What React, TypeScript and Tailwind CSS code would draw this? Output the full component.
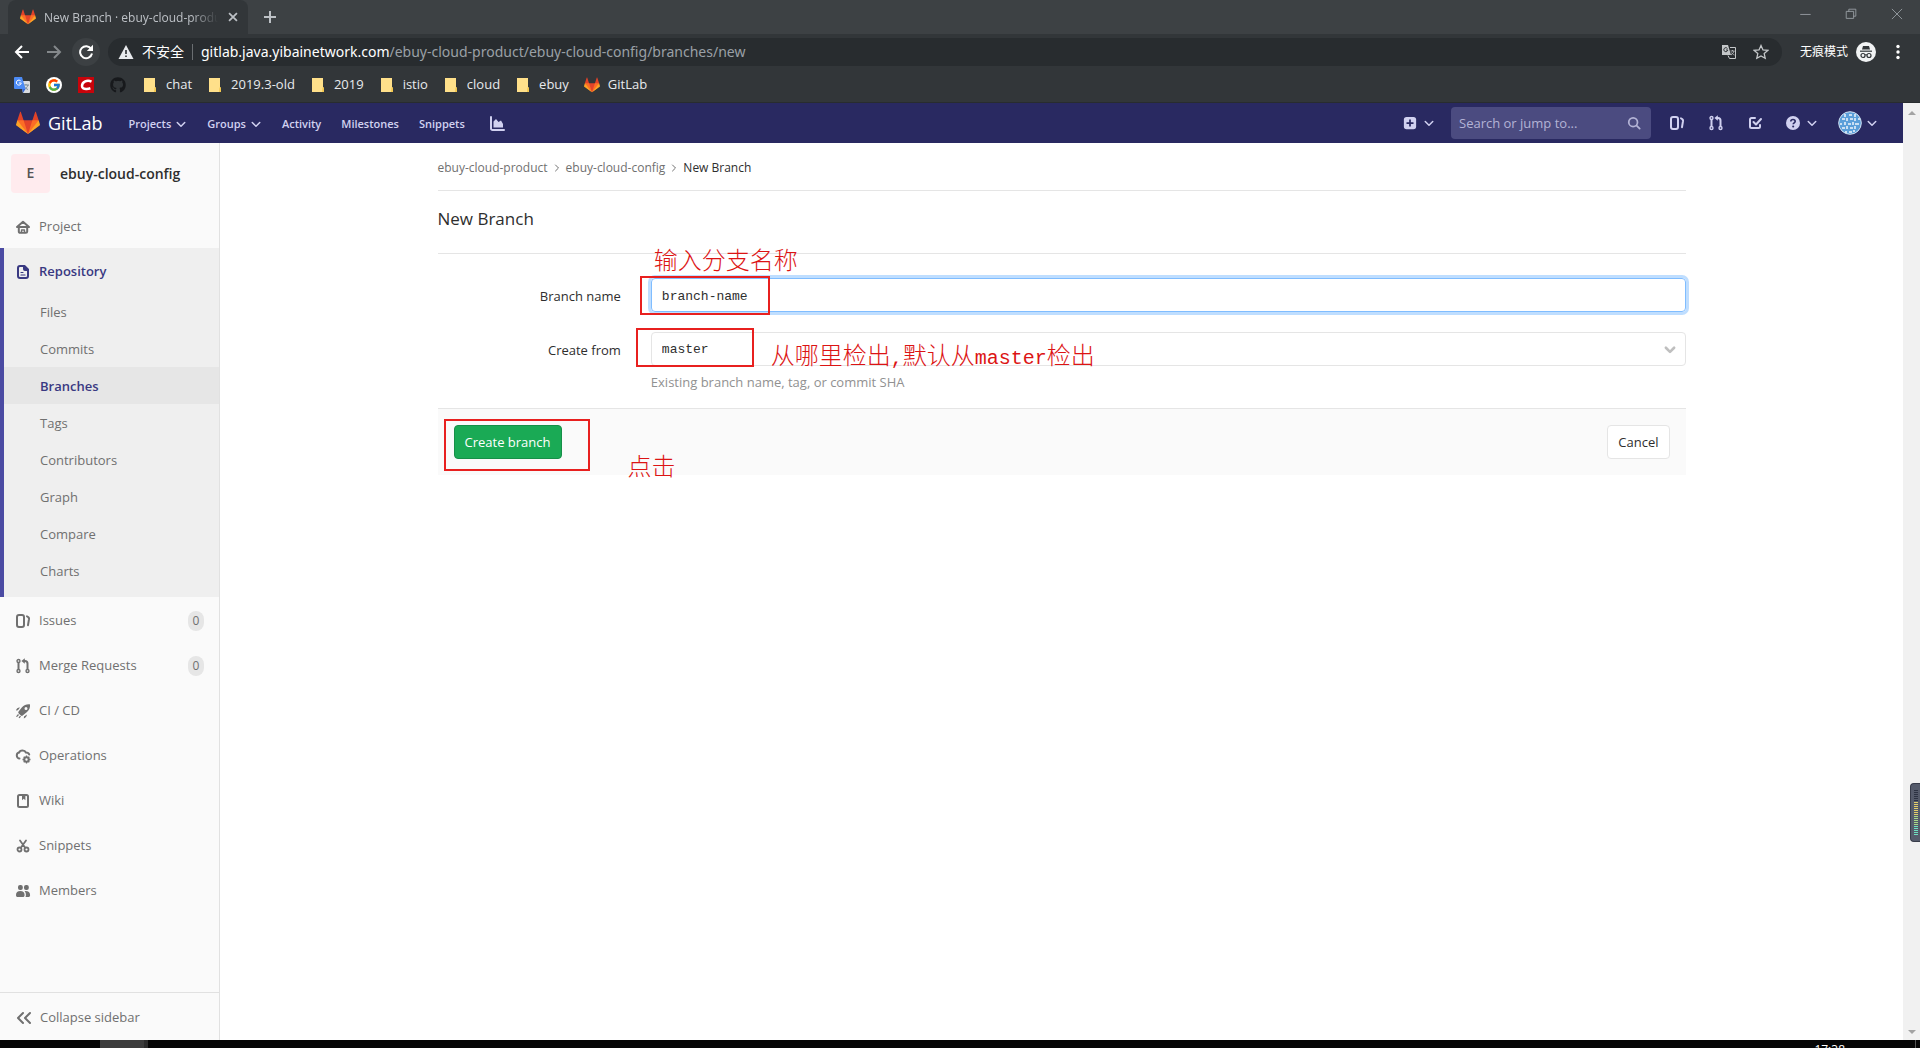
import React from "react";
import { FcGoogle } from "react-icons/fc";
import { FaGithub } from "react-icons/fa";

const UI = "font-['Open_Sans','Noto_Sans_CJK_SC',sans-serif]";

function Tanuki({ className }: { className: string }) {
  return (
    <svg className={className} viewBox="0 0 36 36" aria-hidden="true">
      <path fill="#e24329" d="M2 14l9.38 9v-9l-4-12.28c-.205-.632-1.176-.632-1.38 0z" />
      <path fill="#e24329" d="M34 14l-9.38 9v-9l4-12.28c.205-.632 1.176-.632 1.38 0z" />
      <path fill="#e24329" d="M18 34.38L3 14h30z" />
      <path fill="#fc6d26" d="M18 34.38L11.38 14H2l4 11z" />
      <path fill="#fc6d26" d="M18 34.38L24.62 14H34l-4 11z" />
      <path fill="#fca326" d="M2 14L.1 20.16c-.18.565 0 1.2.5 1.56l17.42 12.66z" />
      <path fill="#fca326" d="M34 14l1.9 6.16c.18.565 0 1.2-.5 1.56L18 34.38z" />
    </svg>
  );
}

type IconProps = { children: React.ReactNode; className?: string };

function Icon({ children, className = "size-4" }: IconProps) {
  return (
    <svg
      className={`shrink-0 ${className}`}
      viewBox="0 0 16 16"
      fill="none"
      stroke="currentColor"
      strokeWidth="2"
      strokeLinecap="round"
      strokeLinejoin="round"
      aria-hidden="true"
    >
      {children}
    </svg>
  );
}

const Chevron = ({ className = "size-3" }: { className?: string }) => (
  <Icon className={className}>
    <path d="M3 6l5 5 5-5" />
  </Icon>
);

const IssuesIcon = () => (
  <Icon>
    <rect x="2" y="2" width="7" height="12" rx="2" />
    <path d="M12 3.400c1.700.6 2.200 1.400 2 2.800l-1 6" />
  </Icon>
);

const MergeIcon = () => (
  <Icon>
    <circle cx="3.500" cy="3" r="1.500" strokeWidth="1.400" />
    <circle cx="3.500" cy="13" r="1.500" strokeWidth="1.400" />
    <circle cx="12.500" cy="13" r="1.500" strokeWidth="1.400" />
    <path d="M3.500 5v6M12.500 11V5.500c0-1.500-.8-2.500-2.500-2.500H9" strokeLinecap="butt" />
    <path d="M9.800 .3v5.400L6.400 3z" fill="currentColor" stroke="none" />
  </Icon>
);

const HomeIcon = () => (
  <Icon>
    <path d="M2 8L8 2.800 14 8z" />
    <path d="M3.800 8v4.500a1.300 1.300 0 0 0 1.300 1.300h5.800a1.300 1.300 0 0 0 1.300-1.300V8" />
    <path d="M6.500 13.500V11h3v2.500" strokeWidth="1.300" />
  </Icon>
);

const DocIcon = () => (
  <Icon>
    <path d="M9.500 2H5a2 2 0 0 0-2 2v8a2 2 0 0 0 2 2h6a2 2 0 0 0 2-2V5.500z" />
    <path d="M8.500 2v3.500a1 1 0 0 0 1 1H13L9.500 2z" fill="currentColor" strokeWidth="1" />
    <path d="M6 8.500h2M6 11h4" strokeWidth="1.200" />
  </Icon>
);

const RocketIcon = () => (
  <Icon>
    <g fill="currentColor" stroke="none">
      <path
        fillRule="evenodd"
        d="M15 1.400c-3.300-.3-6 .6-8 2.900L3.600 8.600c-.5.700-.4 1.300.1 1.800l2.200 2.100c.6.500 1.200.6 1.800.1l4.300-3.700C14.500 6.700 15.300 4.300 15 1.400zM11 7a1.500 1.500 0 1 1 0-3 1.500 1.500 0 0 1 0 3z"
      />
      <path d="M5 4.500C3 4.300 1.600 5.300.9 7.500l2-.3zM11.800 11.500c.1 1.800-.9 3.100-3 3.900l.2-2z" />
      <path d="M3 11l-2 2.500 1 .6 2-2.100zM5 12.700l-1.500 1.900 1.200.6L6 13.300z" />
    </g>
  </Icon>
);

const OpsIcon = () => (
  <Icon>
    <path d="M4.500 10.500C3 10.500 1.800 9.200 1.800 7.500s1-2.700 2.300-2.900C4.500 3.300 5.900 2.500 7.500 2.500c1.700 0 2.900.8 3.400 2 1.700 0 2.900.8 3.300 2" />
    <circle cx="11.500" cy="11.500" r="2.200" />
    <g strokeWidth="1.300" strokeLinecap="butt">
      <path d="M11.500 7.500v1.500M11.500 14v1.500M7.500 11.500h1.500M14 11.500h1.500M8.700 8.700l1 1M13.300 13.300l1 1M14.300 8.700l-1 1M9.700 13.300l-1 1" />
    </g>
  </Icon>
);

const WikiIcon = () => (
  <Icon>
    <rect x="3" y="2" width="10" height="12" rx="1.500" />
    <path d="M7 2v5.200l1.700-1.400 1.700 1.400V2z" fill="currentColor" stroke="none" />
  </Icon>
);

const ScissorsIcon = () => (
  <Icon>
    <circle cx="4.500" cy="11.500" r="2" strokeWidth="1.800" />
    <circle cx="11.500" cy="11.500" r="2" strokeWidth="1.800" />
    <path d="M6 9.500L11 2.500M10 9.500L5 2.500" strokeWidth="1.800" />
  </Icon>
);

const MembersIcon = () => (
  <Icon>
    <g fill="currentColor" stroke="none">
      <rect x="3" y="2" width="4.800" height="5" rx="2" />
      <rect x="9" y="2" width="4.800" height="5" rx="2" />
      <path d="M1 12c0-2.700 1.500-4 4.300-4s4.300 1.300 4.300 4c0 1.400-.6 2-1.800 2h-5c-1.200 0-1.800-.6-1.800-2z" />
      <path d="M9.500 8.100c3.500-.4 5.600 1.100 5.600 3.900 0 1.400-.6 2-1.800 2h-2.800c.3-.5.400-1.200.4-2 0-1.600-.5-3-1.400-3.900z" />
    </g>
  </Icon>
);

const CollapseIcon = () => (
  <Icon>
    <path d="M7 3L2 8l5 5M14 3L9 8l5 5" />
  </Icon>
);

function GoogleTranslate() {
  return (
    <svg className="size-4" viewBox="0 0 16 16" aria-hidden="true">
      <path d="M6 4h9a1 1 0 0 1 1 1v10a1 1 0 0 1-1 1H9z" fill="#dadce0" />
      <path d="M9 8h6M12 7v1M14 8c-.5 2-2 3.500-4 4.500M10.500 9.500c.8 1.500 2 2.500 3.500 3" stroke="#6f8390" fill="none" strokeWidth=".9" />
      <path d="M1 0h7l3.500 12H1a1 1 0 0 1-1-1V1a1 1 0 0 1 1-1z" fill="#4c8bf5" />
      <path d="M8 12h3.500L9 16z" fill="#3367d6" />
      <path d="M7.300 6H4.900M7 4.300a2.500 2.500 0 1 0 .3 1.900" stroke="#fff" fill="none" />
    </svg>
  );
}

function CsdnIcon() {
  return (
    <svg className="size-4" viewBox="0 0 16 16" aria-hidden="true">
      <rect width="16" height="16" fill="#c8040b" />
      <path d="M13.500 4.600c-2-.9-4.500-1-6.300-.2C5 5.400 4 7.200 4 9c0 2.300 2 3 4.500 2.900 1.300 0 2.700-.2 3.900-.6" stroke="#fff" strokeWidth="2.500" fill="none" />
    </svg>
  );
}

function FolderIcon() {
  return (
    <svg className="size-4" viewBox="0 0 16 16" aria-hidden="true">
      <path d="M2 1h11v9.500h1V15H2z" fill="#ffe08a" />
      <path d="M12.500 10.500h1.500V15h-2z" fill="#f3c74f" />
    </svg>
  );
}

function TabStrip() {
  return (
    <div className="flex h-[34px] items-center bg-[#3d4144] pl-2 text-[#9aa0a6]">
      <div className="flex h-full w-60 items-center rounded-t-lg bg-[#323639] pl-3 pr-2">
        <Tanuki className="size-4 shrink-0" />
        <span className="ml-2 flex-1 overflow-hidden whitespace-nowrap pt-0.5 text-xs text-[#bdc1c6] [mask-image:linear-gradient(to_right,black_85%,transparent)]">
          New Branch · ebuy-cloud-product
        </span>
        <button aria-label="Close tab" className="ml-2 text-[#bdc1c6]">
          <Icon className="size-3.5">
            <path d="M3.500 3.500l9 9M12.500 3.500l-9 9" strokeLinecap="butt" />
          </Icon>
        </button>
      </div>
      <button aria-label="New tab" className="ml-3.5 text-[#bdc1c6]">
        <Icon>
          <path d="M8 2v12M2 8h12" strokeLinecap="butt" />
        </Icon>
      </button>
      <div className="ml-auto flex items-center gap-8 pb-1.5 pr-4">
        <button aria-label="Minimize">
          <Icon className="size-3.5">
            <path d="M3 8.500h11" strokeWidth="1" />
          </Icon>
        </button>
        <button aria-label="Restore">
          <Icon className="size-3.5">
            <path d="M3 5h8v8H3zM5.500 5V2.500h8v8H11" strokeWidth="1" strokeLinejoin="miter" />
          </Icon>
        </button>
        <button aria-label="Close window">
          <Icon className="size-3.5">
            <path d="M2.500 2.500l11 11M13.500 2.500l-11 11" strokeWidth="1" />
          </Icon>
        </button>
      </div>
    </div>
  );
}

function AddressRow() {
  return (
    <div className="flex h-9 items-center text-white">
      <button aria-label="Back" className="ml-3.5">
        <Icon>
          <path d="M15 8H2M8 2L2 8l6 6" strokeLinecap="butt" strokeLinejoin="miter" />
        </Icon>
      </button>
      <button aria-label="Forward" className="ml-4 text-[#84888b]">
        <Icon>
          <path d="M1 8h13M8 2l6 6-6 6" strokeLinecap="butt" strokeLinejoin="miter" />
        </Icon>
      </button>
      <button aria-label="Reload" className="ml-2.5 grid size-7 place-items-center rounded-full bg-[#3c4043]">
        <Icon>
          <path d="M13.200 5A6 6 0 1 0 14 9.500" strokeLinecap="butt" />
          <path d="M15 .8V7H8.800z" fill="currentColor" stroke="none" />
        </Icon>
      </button>
      <div className="ml-2 flex h-7 flex-1 items-center rounded-full bg-[#282c2f] pl-2.5 pr-3">
        <svg className="size-4" viewBox="0 0 16 16" aria-hidden="true">
          <path d="M8 1l7.500 14H.5z" fill="#e8eaed" />
          <path d="M7.200 6h1.600v4H7.200zM7.200 11.500h1.600V13H7.200z" fill="#282c2f" />
        </svg>
        <span className="ml-2 text-sm">不安全</span>
        <span className="ml-2 h-4 w-px bg-[#6a6e71]" />
        <span className="ml-2 font-['Noto_Sans','Open_Sans',sans-serif] text-sm">
          gitlab.java.yibainetwork.com
          <span className="text-[#9aa0a6]">/ebuy-cloud-product/ebuy-cloud-config/branches/new</span>
        </span>
        <button aria-label="Translate page" className="ml-auto text-[#c4c7c9]">
          <svg className="size-4" viewBox="0 0 16 16" aria-hidden="true">
            <path d="M1 1h6l3 10H1z" fill="currentColor" />
            <path d="M9 3.500h5.500v11H8.500L7 11.500" fill="none" stroke="currentColor" />
            <path d="M9.500 7h4M11.500 6v1M13 7c-.3 1.500-1.500 3-3 4M10.500 8.500c.5 1 1.500 2 3 2.500" stroke="currentColor" strokeWidth=".8" fill="none" />
            <path d="M6.800 6H5M6.500 4.600a2 2 0 1 0 .3 1.400" stroke="#282c2f" fill="none" />
          </svg>
        </button>
        <button aria-label="Bookmark this tab" className="ml-4 mr-px text-[#c4c7c9]">
          <Icon>
            <path
              d="M8 1.500l2 4.400 4.800.5-3.600 3.200 1 4.700L8 11.900l-4.200 2.400 1-4.700L1.200 6.400 6 5.900z"
              strokeWidth="1.300"
              strokeLinejoin="miter"
            />
          </Icon>
        </button>
      </div>
      <span className="ml-[18px] text-xs">无痕模式</span>
      <svg className="ml-2 size-5" viewBox="0 0 20 20" aria-hidden="true">
        <circle cx="10" cy="10" r="10" fill="#f1f3f4" />
        <g fill="none" stroke="#323639">
          <path d="M7 4h6l1 3.500H6z" fill="#323639" stroke="none" />
          <path d="M4 9.200h12" strokeWidth="1.200" />
          <circle cx="7" cy="13.500" r="2" strokeWidth="1.200" />
          <circle cx="13" cy="13.500" r="2" strokeWidth="1.200" />
          <path d="M9 13c.6-.4 1.400-.4 2 0" />
        </g>
      </svg>
      <button aria-label="Browser menu" className="mx-3.5">
        <svg className="size-4" viewBox="0 0 16 16" fill="currentColor" aria-hidden="true">
          <circle cx="8" cy="2.500" r="1.700" />
          <circle cx="8" cy="8" r="1.700" />
          <circle cx="8" cy="13.500" r="1.700" />
        </svg>
      </button>
    </div>
  );
}

const folders = ["chat", "2019.3-old", "2019", "istio", "cloud", "ebuy"];

function BookmarksBar() {
  return (
    <nav aria-label="Bookmarks" className="flex h-[33px] items-center gap-4 border-b border-[#282c2f] pb-0.5 pl-3.5 text-[13px] text-[#e8eaed]">
      <a href="#translate" aria-label="Google Translate"><GoogleTranslate /></a>
      <a href="#google" aria-label="Google"><span className="block rounded-full bg-white p-px"><FcGoogle className="size-3.5" /></span></a>
      <a href="#csdn" aria-label="CSDN"><CsdnIcon /></a>
      <a href="#github" aria-label="GitHub"><FaGithub className="size-4 text-[#17191c]" /></a>
      <div className="flex items-center gap-[15px]">
        {folders.map((name) => (
          <a key={name} href={`#${name}`} className="flex items-center gap-2">
            <FolderIcon />
            {name}
          </a>
        ))}
        <a href="#gitlab" className="flex items-center gap-2">
          <Tanuki className="size-4" />
          GitLab
        </a>
      </div>
    </nav>
  );
}

function GitLabNav() {
  return (
    <header className="flex h-10 items-center bg-[#292961] px-4 text-[#d1d1f0]">
      <a href="#home" className="flex items-center gap-2 text-lg text-white">
        <Tanuki className="size-6" />
        GitLab
      </a>
      <nav aria-label="Primary" className="ml-[26px] flex items-center gap-5 pt-0.5 text-[11px] font-semibold">
        <button className="flex items-center gap-1">Projects <Chevron /></button>
        <button className="flex items-center gap-1">Groups <Chevron /></button>
        <a href="#activity">Activity</a>
        <a href="#milestones">Milestones</a>
        <a href="#snippets">Snippets</a>
        <a href="#analytics" aria-label="Analytics" className="ml-1">
          <svg className="size-4" viewBox="0 0 16 16" aria-hidden="true">
            <path d="M2 1v11.500A1.500 1.500 0 0 0 3.500 14H15" stroke="currentColor" strokeWidth="2" strokeLinecap="round" fill="none" />
            <path d="M4.500 11.500V5.500L7 3l2.500 3L12 4.500l2 3.500v3.500z" fill="currentColor" />
          </svg>
        </a>
      </nav>
      <div className="ml-auto flex items-center">
        <button aria-label="New" className="flex items-center gap-1.5">
          <svg className="size-3.5" viewBox="0 0 16 16" aria-hidden="true">
            <rect x="1" y="1" width="14" height="14" rx="3" fill="currentColor" />
            <path d="M8 4v8M4 8h8" stroke="#292961" strokeWidth="2" />
          </svg>
          <Chevron />
        </button>
        <label className="ml-4 mr-[18px] flex h-8 w-[200px] items-center rounded bg-[#4b4b80] pl-2 pr-2.5 text-[#b3b3d6]">
          <input
            type="search"
            aria-label="Search or jump to"
            placeholder="Search or jump to..."
            className="w-full min-w-0 bg-transparent pt-0.5 text-[13px] outline-none placeholder:text-[#b3b3d6]"
          />
          <Icon className="size-3.5">
            <circle cx="7" cy="7" r="5" />
            <path d="M11 11l3.500 3.500" />
          </Icon>
        </label>
        <div className="flex items-center gap-[23px]">
          <a href="#issues" aria-label="Issues"><IssuesIcon /></a>
          <a href="#merge-requests" aria-label="Merge requests"><MergeIcon /></a>
          <a href="#todos" aria-label="To-do list">
            <Icon>
              <path d="M8 3H4.500a1.500 1.500 0 0 0-1.500 1.500v7A1.500 1.500 0 0 0 4.500 13h7a1.500 1.500 0 0 0 1.500-1.500V10" />
              <path d="M6.500 7l2.500 2.500L14 4" />
            </Icon>
          </a>
          <button aria-label="Help" className="flex items-center gap-1.5">
            <svg className="size-3.5" viewBox="0 0 16 16" aria-hidden="true">
              <circle cx="8" cy="8" r="8" fill="currentColor" />
              <path d="M5.500 6.300C5.500 4.900 6.500 4 8 4s2.500.9 2.500 2.200c0 1.600-2.300 1.700-2.300 3.300" stroke="#292961" strokeWidth="1.800" fill="none" />
              <circle cx="8.200" cy="12" r="1.200" fill="#292961" />
            </svg>
            <Chevron />
          </button>
        </div>
        <button aria-label="Account" className="ml-5 mr-[9px] flex items-center gap-1">
          <svg className="size-6" viewBox="0 0 24 24" aria-hidden="true">
            <circle cx="12" cy="12" r="11.300" fill="#5b9fd9" stroke="#d3e2f2" />
            <g stroke="#f0f6fc" strokeWidth="1.500" fill="none">
              <path d="M7 3v3M11 4h3M17 3v3M4 8h3M9 7v3M12 8h3M17 7v3M20 8h2M2 13h2M7 11v3M10 13h3M15 11v3M17 13h4M4 17h3M9 15v3M12 17h3M17 15v3M8 20v2M11 21h3M16 19v2" />
            </g>
          </svg>
          <Chevron />
        </button>
      </div>
    </header>
  );
}

const subItems = ["Files", "Commits", "Branches", "Tags", "Contributors", "Graph", "Compare", "Charts"];

const lowerItems: { label: string; icon: React.ReactNode; count?: number }[] = [
  { label: "Issues", icon: <IssuesIcon />, count: 0 },
  { label: "Merge Requests", icon: <MergeIcon />, count: 0 },
  { label: "CI / CD", icon: <RocketIcon /> },
  { label: "Operations", icon: <OpsIcon /> },
  { label: "Wiki", icon: <WikiIcon /> },
  { label: "Snippets", icon: <ScissorsIcon /> },
  { label: "Members", icon: <MembersIcon /> },
];

function Sidebar() {
  return (
    <aside className="flex w-[220px] shrink-0 flex-col border-r border-[#e1e1e1] bg-[#fafafa] text-[13px] text-[#707070]">
      <a href="#project" className="flex h-[60px] items-center gap-2.5 pl-[11px] text-[#2e2e2e]">
        <span className="grid size-[39px] place-items-center rounded bg-[#ffebee] text-sm font-semibold text-[#555]">E</span>
        <span className="pt-0.5 text-sm font-semibold">ebuy-cloud-config</span>
      </a>
      <a href="#overview" className="flex h-[45px] items-center gap-2 pl-[15px] pt-0.5">
        <HomeIcon />
        Project
      </a>
      <div className="border-l-4 border-[#4b4ba3] bg-[#efefef] pb-2">
        <a href="#repository" className="flex h-[45px] items-center gap-2 pl-[11px] pt-0.5 font-semibold text-[#393982]">
          <DocIcon />
          Repository
        </a>
        <ul>
          {subItems.map((item) => (
            <li key={item}>
              <a
                href={`#${item.toLowerCase()}`}
                className={
                  item === "Branches"
                    ? "flex h-[37px] items-center bg-[#e6e6e6] pl-9 pt-0.5 font-semibold text-[#393982]"
                    : "flex h-[37px] items-center pl-9 pt-0.5"
                }
              >
                {item}
              </a>
            </li>
          ))}
        </ul>
      </div>
      {lowerItems.map(({ label, icon, count }) => (
        <a key={label} href={`#${label}`} className="flex h-[45px] items-center gap-2 pl-[15px] pr-[15px] pt-0.5">
          {icon}
          {label}
          {count !== undefined && (
            <span className="ml-auto grid h-5 w-4 place-items-center rounded-full bg-[#e6e6e6] text-xs">{count}</span>
          )}
        </a>
      ))}
      <button className="mt-auto flex h-12 items-center gap-2 border-t border-[#e1e1e1] pl-4 pt-0.5 text-left">
        <CollapseIcon />
        Collapse sidebar
      </button>
    </aside>
  );
}

const NOTE = "pointer-events-none absolute whitespace-nowrap font-['Noto_Sans_CJK_SC',sans-serif] text-2xl leading-6 font-light text-[#dc1414]";
const NOTE_LATIN = "font-['Liberation_Mono',monospace] text-xl leading-6 font-normal";
const BOX = "pointer-events-none absolute border-2 border-[#e8201f]";

const Crumb = () => (
  <Icon className="size-2">
    <path d="M5 2l6 6-6 6" />
  </Icon>
);

function NewBranchPage() {
  return (
    <main className="min-w-0 flex-1 bg-white">
      <div className="mx-auto max-w-[1280px] px-4 text-[13px] text-[#2e2e2e]">
        <nav aria-label="Breadcrumb" className="flex h-12 items-center gap-[5px] border-b border-[#e5e5e5] pt-0.5 text-xs text-[#707070]">
          <a href="#group">ebuy-cloud-product</a>
          <Crumb />
          <a href="#project">ebuy-cloud-config</a>
          <Crumb />
          <span className="font-medium text-[#2e2e2e]">New Branch</span>
        </nav>
        <h1 className="flex h-[62px] items-center pb-1.5 text-[17px] font-medium">New Branch</h1>
        <form className="border-t border-[#e5e5e5]" onSubmit={(e) => e.preventDefault()}>
          <div className="-mx-4 grid grid-cols-12 pt-6">
            <label htmlFor="branch" className="col-span-2 flex h-[34px] items-center justify-end pr-3.5 pt-1">Branch name</label>
            <div className="relative col-span-10 px-4">
              <input
                id="branch"
                defaultValue="branch-name"
                className="block h-[34px] w-full rounded border border-[#80bdff] px-2.5 pt-0.5 font-['Liberation_Mono',monospace] shadow-[0_0_0_3px_#bfdeff] outline-none"
              />
              <div className={`${BOX} -top-0.5 left-[5px] h-[39px] w-[130px]`} />
              <div className={`${NOTE} -top-[31px] left-[19px]`}>输入分支名称</div>
            </div>
          </div>
          <div className="-mx-4 grid grid-cols-12 pt-5">
            <label htmlFor="ref" className="col-span-2 flex h-[34px] items-center justify-end pr-3.5 pt-1">Create from</label>
            <div className="relative col-span-10 px-4">
              <div className="relative">
                <select
                  id="ref"
                  className="block h-[34px] w-full appearance-none rounded-sm border border-[#e5e5e5] bg-white px-2.5 pt-0.5 font-['Liberation_Mono',monospace]"
                >
                  <option>master</option>
                </select>
                <Icon className="pointer-events-none absolute right-2.5 top-3 size-3 text-[#bfbfbf]">
                  <path d="M2.500 5l5.500 5.500L13.500 5" strokeWidth="3.500" />
                </Icon>
              </div>
              <p className="mt-1 h-6 pt-[3px] text-[#919191]">Existing branch name, tag, or commit SHA</p>
              <div className={`${BOX} -top-1 left-px h-[39px] w-[118px]`} />
              <div className={`${NOTE} left-[136px] top-2.5`}>
                从哪里检出<span className={NOTE_LATIN}>,</span>默认从
                <span className={NOTE_LATIN}>master</span>检出
              </div>
            </div>
          </div>
          <div className="relative mt-3.5 flex items-start justify-between border-t border-[#e5e5e5] bg-[#fafafa] p-4">
            <button type="submit" className="h-[34px] rounded-sm border border-[#168f48] bg-[#1aaa55] px-2.5 pt-0.5 text-white">
              Create branch
            </button>
            <a href="#cancel" className="flex h-[34px] items-center rounded-sm border border-[#e5e5e5] bg-white px-2.5 pt-0.5">
              Cancel
            </a>
            <div className={`${BOX} left-1.5 top-2.5 h-[52px] w-[146px]`} />
            <div className={`${NOTE} left-[190px] top-11`}>点击</div>
          </div>
        </form>
      </div>
    </main>
  );
}

function ScrollTrack() {
  const bars = Array.from({ length: 23 }, (_, i) => i);
  const tone = (i: number) =>
    i < 6 ? "bg-[#2c3242]" : i < 13 ? "bg-[#e3cf6a]" : i < 18 ? "bg-[#a9d987]" : "bg-[#6fe0c0]";
  return (
    <div className="relative flex w-[17px] shrink-0 flex-col items-center justify-between bg-[#f1f1f1] py-1.5">
      <span className="mt-0.5 border-x-4 border-b-4 border-x-transparent border-b-[#a3a3a3]" />
      <span className="border-x-4 border-t-4 border-x-transparent border-t-[#a3a3a3]" />
      <div className="absolute bottom-[198px] right-0 flex h-[59px] w-2.5 flex-col items-center gap-px rounded-l border border-r-0 border-[#383c4a] bg-[#555b6b] pt-1.5">
        {bars.map((i) => (
          <span key={i} className={`h-px w-1 ${tone(i)}`} />
        ))}
      </div>
    </div>
  );
}

export default function App() {
  return (
    <div className={`flex h-screen flex-col overflow-hidden bg-white ${UI}`}>
      <div className="bg-[#323639]">
        <TabStrip />
        <AddressRow />
        <BookmarksBar />
      </div>
      <div className="flex min-h-0 flex-1">
        <div className="flex min-w-0 flex-1 flex-col">
          <GitLabNav />
          <div className="flex min-h-0 flex-1">
            <Sidebar />
            <NewBranchPage />
          </div>
        </div>
        <ScrollTrack />
      </div>
      <footer className="flex h-2 shrink-0 justify-between overflow-hidden bg-[#060606] pl-[100px] pr-1">
        <span className="w-12 border-r-4 border-[#2c2c2c] bg-[#3c3c3c]" />
        <span className="border-r border-[#555] pr-[70px] text-xs leading-5 text-white">17:38</span>
      </footer>
    </div>
  );
}
